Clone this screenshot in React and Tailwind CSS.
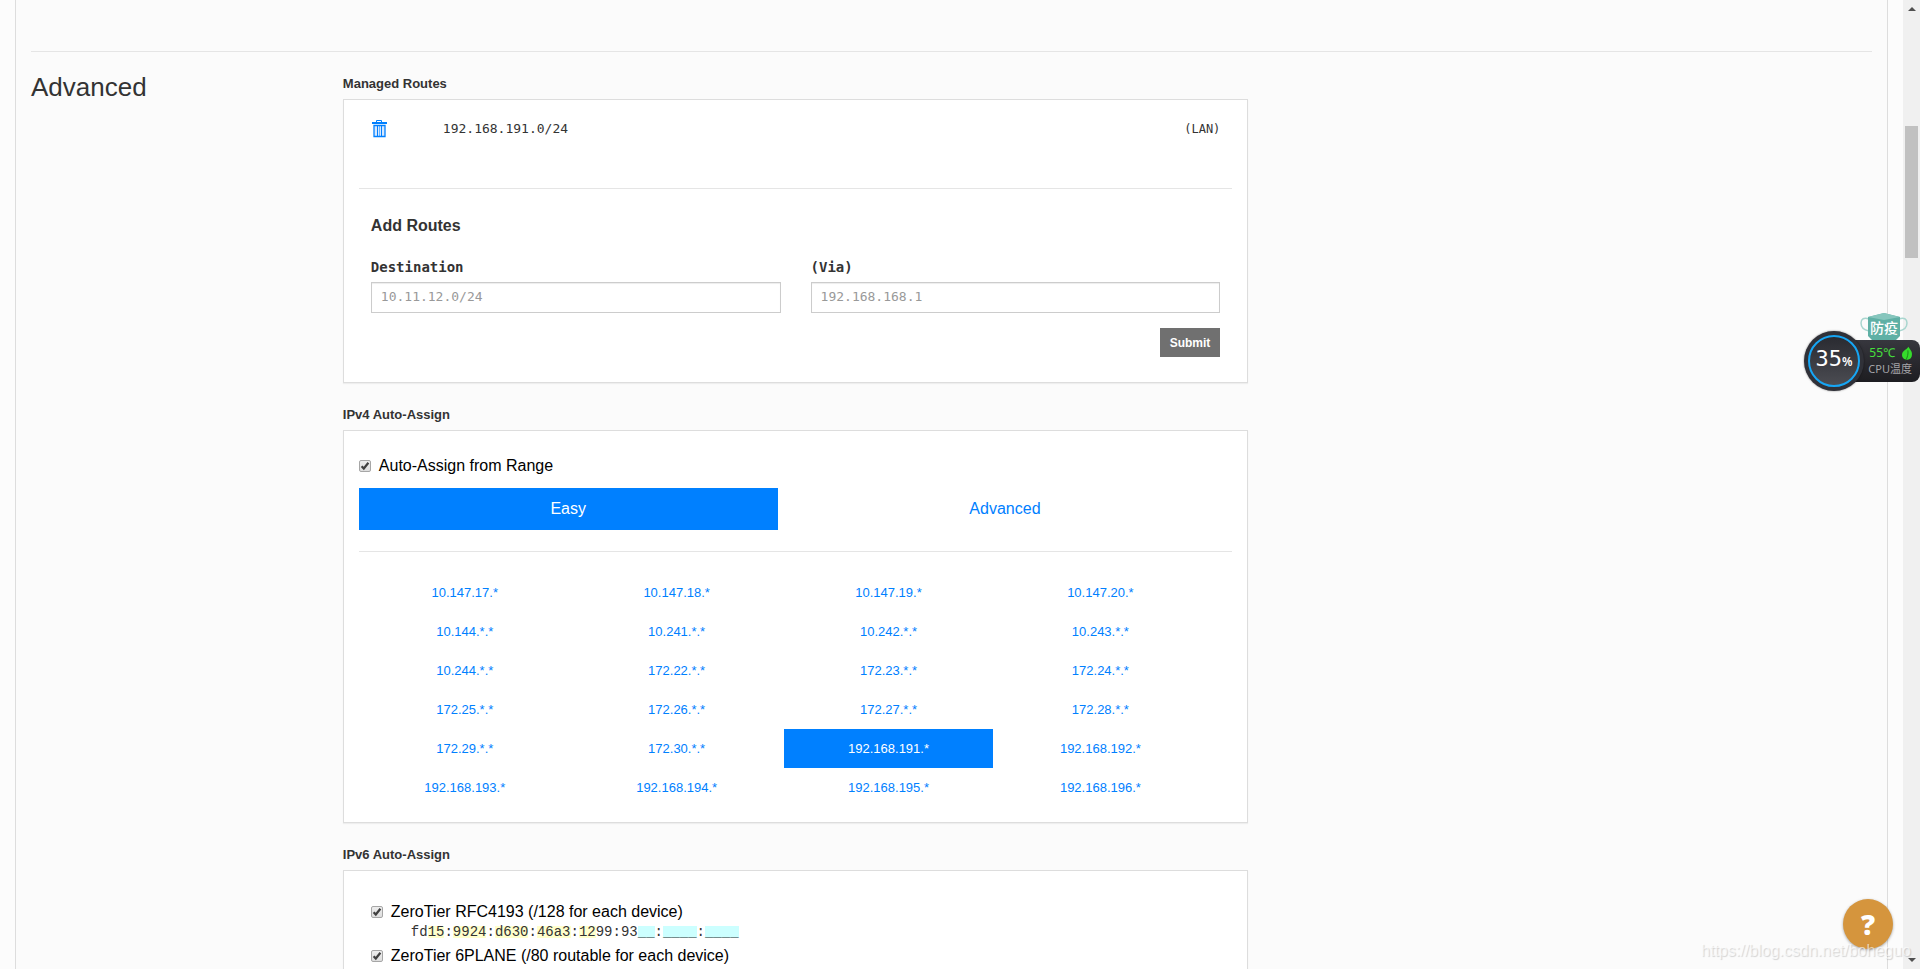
import React, { useState } from "react";

const RANGES = [
  "10.147.17.*", "10.147.18.*", "10.147.19.*", "10.147.20.*",
  "10.144.*.*", "10.241.*.*", "10.242.*.*", "10.243.*.*",
  "10.244.*.*", "172.22.*.*", "172.23.*.*", "172.24.*.*",
  "172.25.*.*", "172.26.*.*", "172.27.*.*", "172.28.*.*",
  "172.29.*.*", "172.30.*.*", "192.168.191.*", "192.168.192.*",
  "192.168.193.*", "192.168.194.*", "192.168.195.*", "192.168.196.*",
];

const MONO = "font-['DejaVu_Sans_Mono',monospace]";

function TrashIcon() {
  return (
    <svg width="15" height="18" viewBox="0 0 15 18" fill="none" stroke="#0080ff" aria-hidden="true">
      <path d="M4.500 2V.5h5V2" />
      <path d="M0 3h15" strokeWidth="2" />
      <path d="M2 5.500h11v11H2z" fill="#d6e8ff" strokeWidth="1.3" />
      <path d="M5.500 5.500v11M9.500 5.500v11" />
      <path d="M7.500 5.500v11" strokeOpacity=".5" />
    </svg>
  );
}

function Check({ children }) {
  return (
    <label className="flex items-center gap-2 text-base leading-5 text-black">
      <span className="grid size-3">
        <input
          type="checkbox"
          defaultChecked
          className="peer size-3 appearance-none rounded-xs border border-[#a6a6a6] bg-linear-to-b from-[#ededed] to-[#dedede] [grid-area:1/1]"
        />
        <svg viewBox="0 0 12 12" className="pointer-events-none invisible size-3 peer-checked:visible [grid-area:1/1]" fill="none" stroke="#404040" strokeWidth="2.2" aria-hidden="true">
          <path d="M2.6 6.2l2.2 2.3L9.4 2.8" />
        </svg>
      </span>
      {children}
    </label>
  );
}

function Section({ title, className, children }) {
  return (
    <section>
      <h4 className="mb-[5px] text-[13px] leading-5 font-bold">{title}</h4>
      <div className={`border border-[#dddddd] bg-white shadow-[0_1px_1px_rgba(0,0,0,0.05)] ${className}`}>{children}</div>
    </section>
  );
}

function Field({ id, label, placeholder }) {
  return (
    <div className="flex flex-1 flex-col gap-[5px]">
      <label htmlFor={id} className={`${MONO} text-sm leading-5 font-bold`}>{label}</label>
      <input
        id={id}
        placeholder={placeholder}
        className={`${MONO} h-[31px] w-full border border-[#cccccc] px-[9px] pb-[2px] text-[13px] shadow-[inset_0_1px_1px_rgba(0,0,0,0.075)] placeholder:text-[#999999]`}
      />
    </div>
  );
}

function Y({ children }) {
  return <span className="inline-block bg-[#ffffcc]">{children}</span>;
}

function C({ children }) {
  return <span className="inline-block bg-[#ccffff]">{children}</span>;
}

function CpuWidget() {
  return (
    <div className="absolute top-[313px] right-0 h-[78px] w-[116px]">
      <svg width="48" height="28" viewBox="0 0 48 28" className="absolute top-0 left-[56px]" aria-hidden="true">
        <path d="M9 6C4 4 1 6 1 10s3 7 8 8M39 6c5-2 8 0 8 4s-3 7-8 8" fill="none" stroke="#a9d6cf" strokeWidth="1.5" />
        <path d="M8 4L24 0l16 4v19l-5 5H13l-5-5z" fill="#5fb0a5" />
        <path d="M8 4L24 0l16 4-16 3z" fill="#86c6bd" />
      </svg>
      <span className="absolute top-[6px] left-[66px] font-['Noto_Sans_CJK_SC',sans-serif] text-sm leading-4 font-medium text-white">防疫</span>
      <div className="absolute top-[27px] right-0 h-[42px] w-[80px] rounded-r-lg bg-linear-to-b from-[#37373e] to-[#1d1d21]">
        <div className="flex flex-col items-end pt-[5px] pr-2 font-['Noto_Sans','Noto_Sans_CJK_SC',sans-serif]">
          <span className="flex items-center gap-[7px] text-xs leading-4 text-[#46e03c]">
            <span className="whitespace-nowrap">55℃</span>
            <svg width="10" height="15" viewBox="0 0 11 15" aria-hidden="true">
              <path d="M7 0c2 3 4 5 4 8 0 4-2 6-5 6.500C2 14.500 0 12 0 9c0-3 2-4 3.500-5.500C5 2.500 6 1.500 7 0z" fill="#35dc2b" />
              <path d="M6.500 4C7 8 6 12 4 15" fill="none" stroke="#1c7d1c" strokeWidth="1" />
            </svg>
          </span>
          <span className="text-[11px] leading-4 whitespace-nowrap text-[#a4a4a8]">CPU温度</span>
        </div>
      </div>
      <div className="absolute bottom-0 left-0 flex size-[60px] items-center justify-center rounded-full bg-[#303138] shadow-[0_0_2px_rgba(0,0,0,0.5)]">
        <div className="flex size-[52px] items-baseline justify-center rounded-full border-2 border-[#16a6f5] bg-linear-to-b from-[#2a2b31] to-[#4b4c52] pt-[10px] font-['DejaVu_Sans_Mono',monospace] text-[22px] leading-6 text-white">
          35<span className="font-['Noto_Sans',sans-serif] text-xs font-semibold">%</span>
        </div>
      </div>
    </div>
  );
}

export default function App() {
  const [mode, setMode] = useState("Easy");
  const [range, setRange] = useState("192.168.191.*");

  return (
    <div className="relative flex h-screen overflow-hidden bg-[#fcfcfc] font-['Liberation_Sans',Arial,sans-serif] text-[#333333]">
      <main className="mx-[15px] min-w-0 flex-1 border-x border-[#dddddd] bg-[#fbfbfb] px-[15px] pt-[51px]">
        <hr className="border-[#e5e5e5]" />
        <div className="grid grid-cols-12 gap-[30px] pt-[22px]">
          <h2 className="col-span-2 text-[26px] leading-[26px]">Advanced</h2>

          <div className="col-span-6 flex flex-col gap-[22px]">
            <Section title="Managed Routes" className="px-[15px] pb-[25px]">
              <div className={`${MONO} flex h-[88px] items-start px-3 pt-5 text-[13px] leading-[18px]`}>
                <button type="button" aria-label="Delete route" className="w-[72px] pl-px">
                  <TrashIcon />
                </button>
                <span>192.168.191.0/24</span>
                <span className="ml-auto text-xs leading-[18px]">(LAN)</span>
              </div>
              <hr className="border-[#e5e5e5]" />
              <form className="px-3 pt-[27px]" onSubmit={(e) => e.preventDefault()}>
                <h3 className="text-base leading-5 font-bold">Add Routes</h3>
                <div className="flex gap-[30px] pt-[21px]">
                  <Field id="destination" label="Destination" placeholder="10.11.12.0/24" />
                  <Field id="via" label="(Via)" placeholder="192.168.168.1" />
                </div>
                <button type="submit" className="mt-[15px] ml-auto block h-[29px] bg-[#707070] px-[10px] text-xs font-bold text-white">
                  Submit
                </button>
              </form>
            </Section>

            <Section title="IPv4 Auto-Assign" className="px-[15px] pt-[25px] pb-[15px]">
              <Check>Auto-Assign from Range</Check>
              <div className="grid grid-cols-2 pt-3">
                {["Easy", "Advanced"].map((m) => (
                  <button
                    key={m}
                    type="button"
                    onClick={() => setMode(m)}
                    className={`mr-[18px] h-[42px] text-base ${mode === m ? "bg-[#0080ff] text-white" : "text-[#0080ff]"}`}
                  >
                    {m}
                  </button>
                ))}
              </div>
              <hr className="my-[21px] border-[#e5e5e5]" />
              <div className="mr-[27px] ml-px grid grid-cols-4 gap-x-[2px]">
                {RANGES.map((r) => (
                  <button
                    key={r}
                    type="button"
                    onClick={() => setRange(r)}
                    className={`h-[39px] text-[13px] ${range === r ? "bg-[#0080ff] text-white" : "text-[#0080ff]"}`}
                  >
                    {r}
                  </button>
                ))}
              </div>
            </Section>

            <Section title="IPv6 Auto-Assign" className="px-[27px] pt-[31px] pb-10">
              <Check>ZeroTier RFC4193 (/128 for each device)</Check>
              <p className="mt-1 mb-2 pl-10 font-['Liberation_Mono',monospace] text-sm leading-3">
                fd<Y>15</Y>:<Y>9924</Y>:<Y>d630</Y>:<Y>46a3</Y>:<Y>12</Y>99:93<C>__</C>:<C>____</C>:<C>____</C>
              </p>
              <Check>ZeroTier 6PLANE (/80 routable for each device)</Check>
            </Section>
          </div>
        </div>
      </main>

      <div className="flex w-[17px] flex-col items-center justify-between bg-[#f0f0f0] py-[7px]" aria-hidden="true">
        <svg width="8" height="4" viewBox="0 0 8 4" fill="#505050"><path d="M4 0l4 4H0z" /></svg>
        <div className="mt-[115px] mb-auto h-[132px] w-[13px] bg-[#c1c1c1]" />
        <svg width="8" height="4" viewBox="0 0 8 4" fill="#505050"><path d="M0 0h8L4 4z" /></svg>
      </div>

      <CpuWidget />

      <button
        type="button"
        aria-label="Help"
        className="absolute right-[27px] bottom-5 size-[50px] rounded-full bg-[#d5953d] font-['Open_Sans',sans-serif] text-[28px] font-extrabold text-white shadow-[0_1px_3px_rgba(0,0,0,0.35)]"
      >
        ?
      </button>
      <span className="pointer-events-none absolute right-[9px] bottom-[9px] text-base leading-[18px] text-white/60 [text-shadow:1px_1px_1px_rgba(0,0,0,0.16)]">
        https://blog.csdn.net/boheguo
      </span>
    </div>
  );
}
